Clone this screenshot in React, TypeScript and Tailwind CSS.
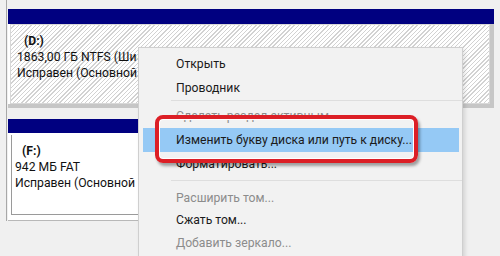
import type { ReactElement } from "react";

const hatch =
  "bg-[repeating-linear-gradient(135deg,#ffffff_0px,#ffffff_2px,#d2d2d2_2px,#d2d2d2_3px)]";

type Item = { label: string; disabled?: boolean; active?: boolean; h: string };

const group1: Item[] = [
  { label: "Открыть", h: "h-[24px]" },
  { label: "Проводник", h: "h-[24px]" },
];

const group2: Item[] = [
  { label: "Сделать раздел активным", disabled: true, h: "h-[24px]" },
  { label: "Изменить букву диска или путь к диску...", active: true, h: "h-[24px]" },
  { label: "Форматировать...", h: "h-[24px]" },
];

const group3: Item[] = [
  { label: "Расширить том...", disabled: true, h: "h-[22px]" },
  { label: "Сжать том...", h: "h-[23px]" },
  { label: "Добавить зеркало...", disabled: true, h: "h-[23px]" },
];

const MenuRow = ({ item }: { item: Item }): ReactElement => (
  <div
    className={`${item.h} flex items-center pl-[33px] ml-[4px] mr-[3px] whitespace-nowrap ${
      item.active ? "bg-[#95c9f5]" : ""
    } ${item.disabled ? "text-[#8c8c8c]" : "text-[#1b1b1b]"}`}
  >
    {item.label}
  </div>
);

export default function App(): ReactElement {
  return (
    <div
      className="relative w-[500px] h-[256px] overflow-hidden bg-[#f0f0f0] text-[12.2px] leading-none"
      style={{ fontFamily: 'Roboto, "Noto Sans", sans-serif' }}
    >
      {/* Disk D: */}
      <div className="ml-[6px] h-[112px] border-l border-[#a8a8a8] pt-[9px] pl-[1px]">
        <div className="w-[486px] h-[15px] bg-[#000080]" />
        <div className="w-[486px] h-[84px] bg-white pl-[2px] border-r-[4px] border-b-[4px] border-[#c6c6c6]">
          <div className={`h-full border border-[#d8d8d8] ${hatch} pt-[10px] pl-[6px] text-[#111]`}>
            <div className="w-[120px] overflow-hidden whitespace-nowrap">
              <div className="font-bold pl-[7px]">(D:)</div>
              <div className="mt-[4px]">1863,00 ГБ NTFS (Шифрованный)</div>
              <div className="mt-[4px]">Исправен (Основной раздел)</div>
            </div>
          </div>
        </div>
      </div>

      {/* Disk F: */}
      <div className="ml-[6px] h-[109px] border-l border-[#a8a8a8] pt-[7px] pl-[1px]">
        <div className="w-[440px] h-[14px] bg-[#000080]" />
        <div className="w-[440px] h-[88px] bg-white pl-[3px] pt-[2px] border-b-[1px] border-[#b8b8b8]">
          <div className="h-[80px] border-l border-b border-[#9a9a9a] pt-[10px] pl-[3px] text-[#111]">
            <div className="w-[120px] overflow-hidden whitespace-nowrap">
              <div className="font-bold pl-[7px]">(F:)</div>
              <div className="mt-[4px]">942 МБ FAT</div>
              <div className="mt-[4px]">Исправен (Основной раздел)</div>
            </div>
          </div>
        </div>
      </div>

      {/* Context menu */}
      <div className="absolute left-[138px] top-[47px] w-[325px] h-[230px] bg-[#f2f2f2] border border-[#cfcfcf] shadow-[2px_2px_4px_rgba(0,0,0,0.12)] pt-[4px]">
        {group1.map((it) => (
          <MenuRow key={it.label} item={it} />
        ))}
        <div className="h-px bg-[#dedede] ml-[32px]" />
        <div className="h-[3px]" />
        {group2.map((it) => (
          <MenuRow key={it.label} item={it} />
        ))}
        <div className="h-[4px]" />
        <div className="h-px bg-[#dedede] ml-[32px]" />
        <div className="h-[6px]" />
        {group3.map((it) => (
          <MenuRow key={it.label} item={it} />
        ))}

        {/* Red callout frame */}
        <div className="absolute left-[16px] top-[67px] w-[263px] h-[48px] rounded-[8px] border-[4px] border-[#dc1f26] shadow-[2px_3px_3px_rgba(0,0,0,0.35),inset_0_0_0_1px_#ffffff]" />
      </div>
    </div>
  );
}
